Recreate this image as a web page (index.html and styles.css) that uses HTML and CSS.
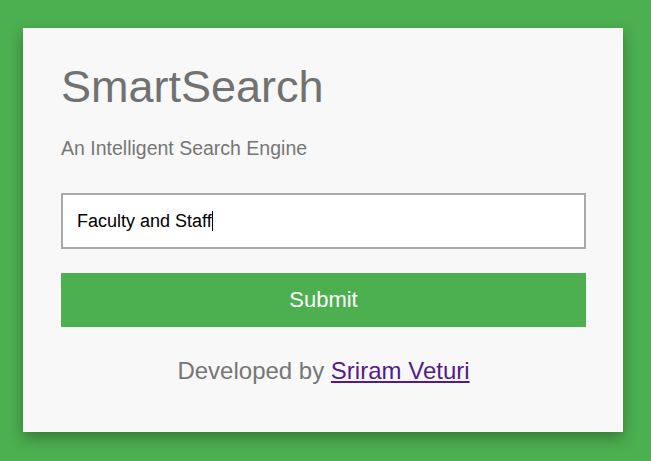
FILE: index.html
```html
<!DOCTYPE html>
<html lang="en">
<head>
<meta charset="utf-8">
<title>SmartSearch</title>
<link rel="stylesheet" href="styles.css">
</head>
<body>
  <main class="card">
    <h1 class="title">SmartSearch</h1>
    <p class="subtitle">An Intelligent Search Engine</p>
    <form class="search" onsubmit="return false">
      <div class="field"><span class="value">Faculty and Staff</span><span class="caret"></span></div>
      <button class="submit" type="submit">Submit</button>
    </form>
    <p class="credit">Developed by <a class="author" href="#">Sriram Veturi</a></p>
  </main>
</body>
</html>
```
FILE: styles.css
```css
html, body {
  margin: 0;
  padding: 0;
}
body {
  background: #4caf50;
  font-family: "Liberation Sans", Arial, sans-serif;
  height: 461px;
  overflow: hidden;
  padding: 28px 0 0 23px;
  box-sizing: border-box;
}
.card {
  width: 600px;
  box-sizing: border-box;
  background: #f8f8f8;
  padding: 34px 37px 47px 38px;
  box-shadow: 0 6px 14px rgba(0, 0, 0, 0.3);
  display: flex;
  flex-direction: column;
}
.title {
  margin: 0;
  font-size: 45px;
  line-height: 50px;
  font-weight: normal;
  color: #717171;
}
.subtitle {
  margin: 25px 0 0;
  font-size: 19.5px;
  line-height: 22px;
  color: #767676;
}
.search {
  margin: 34px 0 0;
  display: flex;
  flex-direction: column;
  gap: 24px;
}
.field {
  height: 56px;
  box-sizing: border-box;
  border: 2px solid #a9a9a9;
  background: #fff;
  padding: 0 14px;
  display: flex;
  align-items: center;
  font-size: 18px;
  color: #000;
}
.caret {
  display: inline-block;
  width: 1px;
  height: 20px;
  background: #000;
}
.submit {
  height: 54px;
  border: 0;
  margin: 0;
  background: #4caf50;
  color: #fff;
  font-family: inherit;
  font-size: 22px;
  padding: 0;
  cursor: pointer;
}
.credit {
  margin: 30px 0 0;
  text-align: center;
  font-size: 24px;
  line-height: 28px;
  color: #767676;
}
.author {
  color: #551a8b;
}
```
